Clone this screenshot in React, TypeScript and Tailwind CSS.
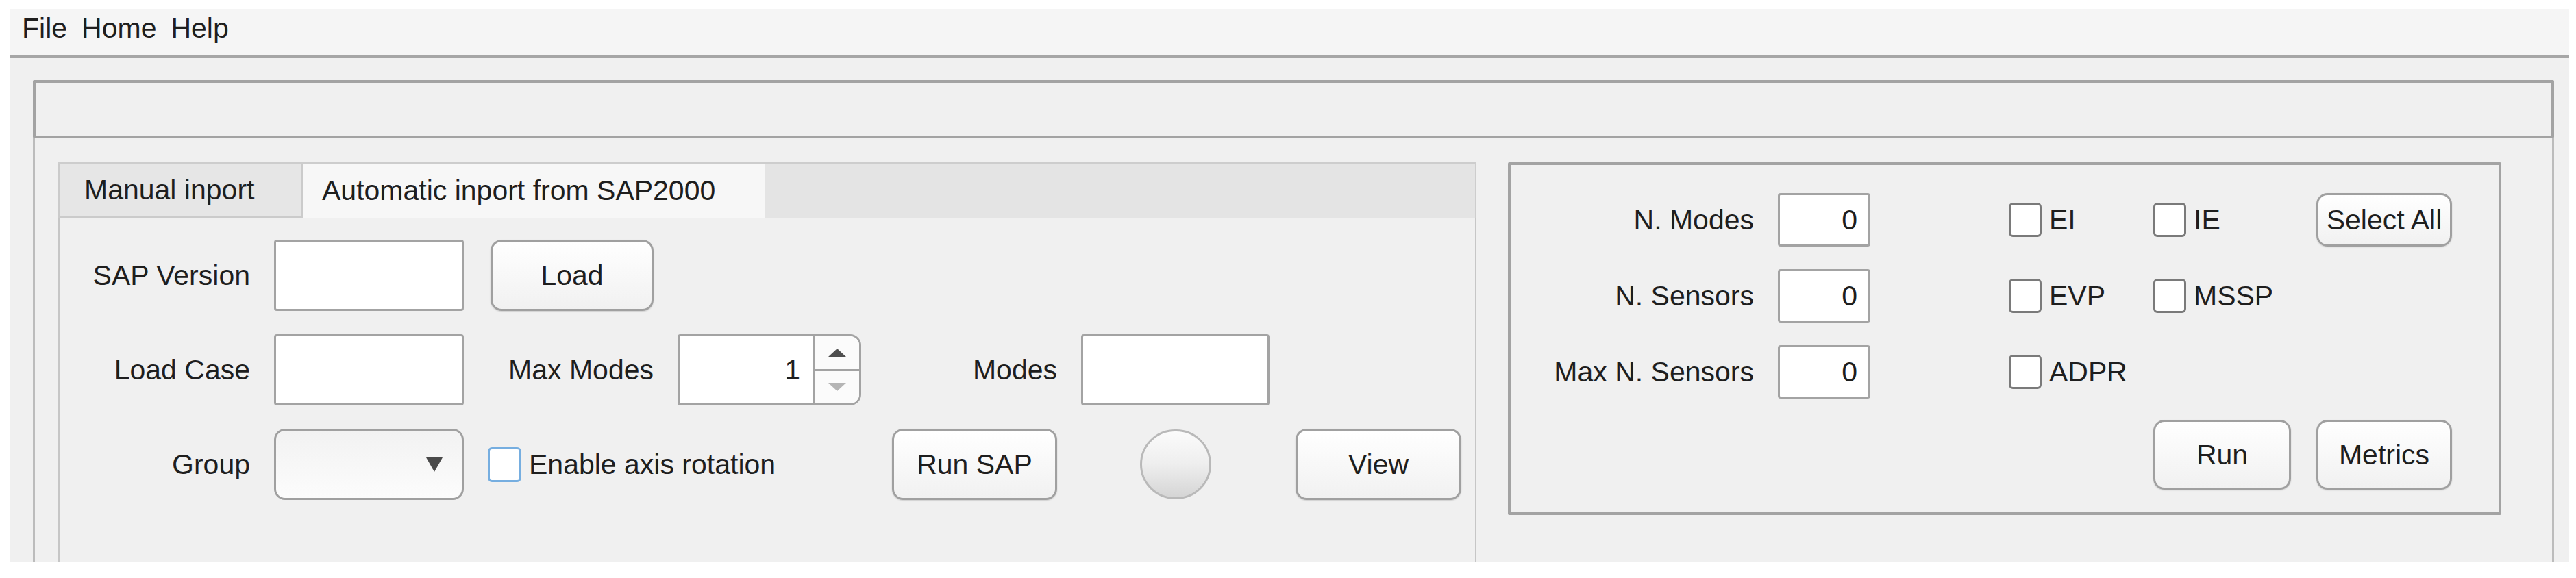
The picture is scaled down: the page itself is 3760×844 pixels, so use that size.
import React from 'react';

const Field: React.FC<{ value?: string; className?: string }> = ({ value, className = '' }) => (
    <div className={`flex items-center justify-end bg-white border-[3px] border-[#a3a3a3] rounded-[4px] ${className}`}>
        {value}
    </div>
);

const Btn: React.FC<{ label: string; className?: string }> = ({ label, className = '' }) => (
    <div
        className={`flex items-center justify-center rounded-[16px] border-[3px] border-[#a0a0a0] bg-linear-to-b from-white to-[#f1f1f1] shadow-[0_1px_2px_rgba(0,0,0,0.15)] ${className}`}
    >
        {label}
    </div>
);

const Check: React.FC<{ label: string; focus?: boolean }> = ({ label, focus }) => (
    <div className="flex items-center gap-[11px] whitespace-nowrap">
        <div
            className={
                focus
                    ? 'w-[49px] h-[51px] bg-white rounded-[6px] border-[3px] border-[#76aee0]'
                    : 'w-[48px] h-[50px] bg-white rounded-[6px] border-[3px] border-[#7a7a7a]'
            }
        />
        <span>{label}</span>
    </div>
);

const Tri: React.FC<{ up?: boolean; color: string; w: number; h: number }> = ({ up, color, w, h }) => (
    <svg width={w} height={h} viewBox={`0 0 ${w} ${h}`}>
        <polygon points={up ? `0,${h} ${w / 2},0 ${w},${h}` : `0,0 ${w},0 ${w / 2},${h}`} fill={color} />
    </svg>
);

const Spinner: React.FC = () => (
    <div className="flex w-[268px] h-full bg-white border-[3px] border-[#a3a3a3] rounded-l-[4px] rounded-r-[16px] overflow-hidden">
        <div className="flex-1 flex items-center justify-end pr-[18px]">1</div>
        <div className="w-[68px] flex flex-col border-l-[3px] border-[#a3a3a3] bg-[#fbfbfb]">
            <div className="flex-1 flex items-center justify-center border-b-[3px] border-[#a3a3a3]">
                <Tri up color="#4f4f4f" w={26} h={12} />
            </div>
            <div className="flex-1 flex items-center justify-center">
                <Tri color="#b5b5b5" w={26} h={12} />
            </div>
        </div>
    </div>
);

const Dropdown: React.FC = () => (
    <div className="flex items-center justify-end pr-[28px] w-full h-full rounded-[16px] border-[3px] border-[#a0a0a0] bg-linear-to-b from-[#f2f2f2] to-[#fcfcfc]">
        <Tri color="#4a4a4a" w={24} h={21} />
    </div>
);

const Lamp: React.FC = () => (
    <div className="w-[104px] h-[102px] rounded-full border-[3px] border-[#b9b9b9] bg-linear-to-b from-[#fbfbfb] via-[#eeeeee] to-[#d5d5d5]" />
);

const App: React.FC = () => {
    return (
        <div className="w-[3760px] h-[844px] bg-white pt-[13px] pl-[15px] pr-[10px] font-['Liberation_Sans',Arial,sans-serif] text-[41px] leading-none text-[#1e1e1e]">
            <div className="w-[3735px] h-[807px] bg-[#f0f0f0] flex flex-col overflow-hidden">
                {/* menu bar */}
                <div className="h-[71px] shrink-0 bg-[#f5f5f5] border-b-[4px] border-[#a6a6a6] flex gap-[21px] pl-[17px] pt-[8px]">
                    <span>File</span>
                    <span>Home</span>
                    <span>Help</span>
                </div>

                <div className="flex-1 flex flex-col pl-[33px] pr-[22px] pt-[33px]">
                    {/* empty top box */}
                    <div className="h-[85px] shrink-0 border-[4px] border-[#a3a3a3] rounded-[2px]" />

                    <div className="flex-1 flex border-x-[3px] border-[#bcbcbc] pl-[34px] pt-[35px]">
                        {/* tab group */}
                        <div className="w-[2070px] flex flex-col">
                            <div className="h-[81px] shrink-0 flex bg-[#e4e4e4] border-t-[2px] border-r-[2px] border-[#cdcdcd]">
                                <div className="w-[357px] flex items-center pl-[36px] bg-[#e6e6e6] border-[2px] border-t-0 border-[#cbcbcb]">
                                    Manual inport
                                </div>
                                <div className="w-[675px] flex items-center pl-[28px] bg-[#f7f7f7]">
                                    Automatic inport from SAP2000
                                </div>
                            </div>
                            <div className="flex-1 border-x-[2px] border-[#c6c6c6] pt-[32px]">
                                <div className="grid grid-cols-[278px_277px_242px_278px_241px_275px_245px] grid-rows-[104px_104px_104px] gap-x-[35px] gap-y-[34px]">
                                    <div className="flex items-center justify-end">SAP Version</div>
                                    <Field />
                                    <Btn label="Load" className="w-[238px] justify-self-end" />
                                    <div />
                                    <div />
                                    <div />
                                    <div />

                                    <div className="flex items-center justify-end">Load Case</div>
                                    <Field />
                                    <div className="flex items-center justify-end">Max Modes</div>
                                    <Spinner />
                                    <div className="flex items-center justify-end">Modes</div>
                                    <Field />
                                    <div />

                                    <div className="flex items-center justify-end">Group</div>
                                    <Dropdown />
                                    <div className="col-span-2 flex items-center">
                                        <Check label="Enable axis rotation" focus />
                                    </div>
                                    <Btn label="Run SAP" />
                                    <div className="flex items-center justify-center">
                                        <Lamp />
                                    </div>
                                    <Btn label="View" className="w-[242px] justify-self-end" />
                                </div>
                            </div>
                        </div>

                        {/* right panel */}
                        <div className="ml-[46px] w-[1450px] h-[515px] border-[4px] border-[#a3a3a3] rounded-[2px] pt-[41px]">
                            <div className="grid grid-cols-[390px_337px_211px_238px_198px] grid-rows-[78px_78px_78px] gap-y-[33px]">
                                <div className="flex items-center justify-end pr-[35px]">N. Modes</div>
                                <Field value="0" className="w-[135px] pr-[16px]" />
                                <div className="flex items-center"><Check label="EI" /></div>
                                <div className="flex items-center"><Check label="IE" /></div>
                                <Btn label="Select All" />

                                <div className="flex items-center justify-end pr-[35px]">N. Sensors</div>
                                <Field value="0" className="w-[135px] pr-[16px]" />
                                <div className="flex items-center"><Check label="EVP" /></div>
                                <div className="flex items-center"><Check label="MSSP" /></div>
                                <div />

                                <div className="flex items-center justify-end pr-[35px]">Max N. Sensors</div>
                                <Field value="0" className="w-[135px] pr-[16px]" />
                                <div className="flex items-center"><Check label="ADPR" /></div>
                                <div />
                                <div />
                            </div>
                            <div className="grid grid-cols-[390px_337px_211px_238px_198px] mt-[31px] h-[102px]">
                                <div />
                                <div />
                                <div />
                                <Btn label="Run" className="w-[201px]" />
                                <Btn label="Metrics" />
                            </div>
                        </div>
                    </div>
                </div>
            </div>
        </div>
    );
};

export default App;
